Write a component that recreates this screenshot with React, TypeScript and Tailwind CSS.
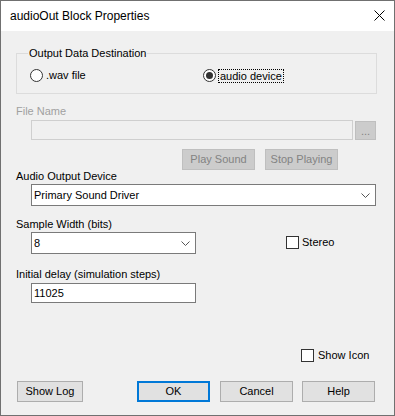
import React from "react";

/* ─── Small controls ─────────────────────────────────── */
function Radio({ checked }: { checked?: boolean }) {
  return (
    <span className="w-[13px] h-[13px] rounded-full border border-[#333333] bg-white flex items-center justify-center shrink-0">
      {checked && <span className="w-[7px] h-[7px] rounded-full bg-[#333333]" />}
    </span>
  );
}

function Check() {
  return <span className="w-[13px] h-[13px] border border-[#333333] bg-white shrink-0" />;
}

function Chevron() {
  return (
    <svg width="9" height="5" viewBox="0 0 9 5" fill="none" stroke="#555555" strokeWidth="1">
      <path d="M0.5 0.5 L4.5 4.5 L8.5 0.5" />
    </svg>
  );
}

function Btn({ label, primary, w = "w-[73px]" }: { label: string; primary?: boolean; w?: string }) {
  return (
    <div
      className={`${w} h-[21px] flex items-center justify-center bg-[#e1e1e1] text-black ${
        primary ? "border-2 border-[#0078d7]" : "border border-[#adadad]"
      }`}
    >
      {label}
    </div>
  );
}

function DisabledBtn({ label, w }: { label: string; w: string }) {
  return (
    <div className={`${w} h-[21px] flex items-center justify-center bg-[#cccccc] border border-[#bfbfbf] text-[#838383]`}>
      {label}
    </div>
  );
}

/* ─── Dialog ─────────────────────────────────────────── */
export default function App() {
  return (
    <div
      className="w-[395px] h-[416px] bg-[#f0f0f0] border border-[#707070] flex flex-col text-[11px] leading-[13px] text-black"
      style={{ fontFamily: '"Liberation Sans", Arial, sans-serif' }}
    >
      {/* Title bar */}
      <div className="h-[30px] bg-white flex items-center justify-between pl-[9px] pr-[9px] shrink-0">
        <span className="text-[12px]">audioOut Block Properties</span>
        <svg width="11" height="11" viewBox="0 0 11 11" stroke="#000" strokeWidth="1" className="mt-[-1px]">
          <path d="M0.5 0.5 L10.5 10.5 M10.5 0.5 L0.5 10.5" />
        </svg>
      </div>

      {/* Body */}
      <div className="pl-[15px] flex flex-col">
        {/* Output Data Destination group */}
        <div className="relative mt-[22px] w-[361px] h-[41px] border border-[#dcdcdc]">
          <span className="absolute left-[11px] top-[-7px] px-[1px] bg-[#f0f0f0]">Output Data Destination</span>
          <div className="flex items-center mt-[15px] ml-[13px] h-[13px]">
            <div className="w-[173px] flex items-center gap-[3px]">
              <Radio />
              <span>.wav file</span>
            </div>
            <div className="flex items-center gap-[2px]">
              <Radio checked />
              <span className="border border-dotted border-black px-[1px] h-[14px] leading-[12px]">audio device</span>
            </div>
          </div>
        </div>

        {/* File name */}
        <div className="mt-[11px] text-[#a0a0a0]">File Name</div>
        <div className="mt-[2px] ml-[15px] flex gap-[2px]">
          <div className="w-[322px] h-[20px] bg-[#f0f0f0] border border-[#cfcfcf]" />
          <div className="w-[21px] h-[19px] mt-[1px] flex items-end justify-center pb-[4px] bg-[#cccccc] border border-[#bfbfbf] text-[#838383] leading-[8px]">
            ...
          </div>
        </div>
        <div className="mt-[9px] ml-[166px] flex gap-[10px]">
          <DisabledBtn label="Play Sound" w="w-[73px]" />
          <DisabledBtn label="Stop Playing" w="w-[73px]" />
        </div>

        {/* Audio device */}
        <div>Audio Output Device</div>
        <div className="mt-[1px] ml-[15px] w-[345px] h-[22px] bg-white border border-[#7a7a7a] flex items-center justify-between pl-[2px] pr-[5px]">
          <span>Primary Sound Driver</span>
          <Chevron />
        </div>

        {/* Sample width */}
        <div className="mt-[12px]">Sample Width (bits)</div>
        <div className="mt-[1px] flex items-start">
          <div className="ml-[15px] w-[165px] h-[22px] bg-white border border-[#7a7a7a] flex items-center justify-between pl-[2px] pr-[5px]">
            <span>8</span>
            <Chevron />
          </div>
          <div className="ml-[90px] mt-[4px] flex items-center gap-[3px]">
            <Check />
            <span>Stereo</span>
          </div>
        </div>

        {/* Initial delay */}
        <div className="mt-[14px]">Initial delay (simulation steps)</div>
        <div className="mt-[2px] ml-[15px] w-[165px] h-[20px] bg-white border border-[#7a7a7a] flex items-center pl-[2px]">
          11025
        </div>

        {/* Show icon */}
        <div className="mt-[46px] ml-[285px] flex items-center gap-[4px] h-[13px]">
          <Check />
          <span>Show Icon</span>
        </div>

        {/* Buttons */}
        <div className="mt-[19px] ml-[1px] flex">
          <Btn label="Show Log" w="w-[66px]" />
          <div className="ml-[54px]">
            <Btn label="OK" primary />
          </div>
          <div className="ml-[10px]">
            <Btn label="Cancel" />
          </div>
          <div className="ml-[9px]">
            <Btn label="Help" />
          </div>
        </div>
      </div>
    </div>
  );
}
